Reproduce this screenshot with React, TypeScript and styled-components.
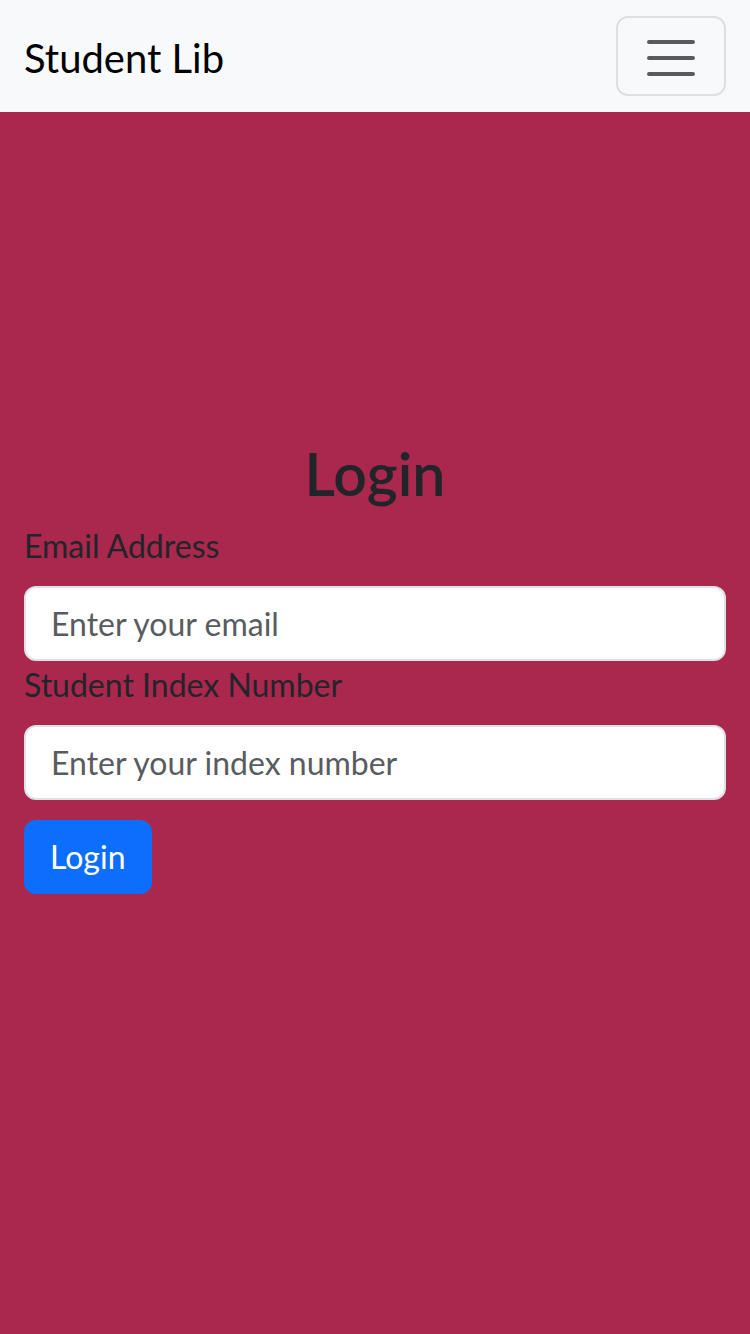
import React from "react";
import styled, { createGlobalStyle } from "styled-components";

const Global = createGlobalStyle`
  html, body { margin: 0; padding: 0; }
  body {
    background: #aa274e;
    font-family: Lato, "Noto Sans", sans-serif;
    color: #212529;
    font-size: 32px;
    line-height: 1.5;
  }
  * { box-sizing: border-box; }
`;

const Navbar = styled.nav`
  background: #f8f9fa;
  height: 112px;
  padding: 16px 24px;
  display: flex;
  align-items: center;
  justify-content: space-between;
`;

const Brand = styled.a`
  font-size: 40px;
  line-height: 60px;
  color: #000;
  text-decoration: none;
  padding: 12px 0 8px;
`;

const Toggler = styled.button`
  width: 110px;
  height: 80px;
  border: 2px solid rgba(0, 0, 0, 0.1);
  border-radius: 12px;
  background: transparent;
  padding: 4px 0 0;
  display: flex;
  align-items: center;
  justify-content: center;
`;

const Main = styled.main`
  padding: 326px 24px 0;
`;

const Title = styled.h1`
  margin: 0 0 12px;
  font-size: 59px;
  font-weight: 600;
  line-height: 72px;
  text-align: center;
  color: #212529;
`;

const Label = styled.label`
  display: block;
  margin-bottom: 16px;
  line-height: 48px;
  font-size: 32px;
  color: #212529;
`;

const Input = styled.input`
  display: block;
  width: 100%;
  height: 75px;
  padding: 12px 25px;
  font-family: inherit;
  font-size: 32px;
  color: #212529;
  background: #fff;
  border: 2px solid #dee2e6;
  border-radius: 12px;
  outline: none;
  &::placeholder { color: #595c5f; }
`;

const Button = styled.button`
  margin-top: 20px;
  height: 74px;
  padding: 0 26px 2px;
  background: #0d6efd;
  color: #fff;
  border: none;
  border-radius: 12px;
  font-family: inherit;
  font-size: 32px;
`;

export default function App() {
  return (
    <>
      <Global />
      <Navbar>
        <Brand href="#">Student Lib</Brand>
        <Toggler aria-label="Toggle navigation">
          <svg width="60" height="60" viewBox="0 0 30 30">
            <path d="M4 7h22M4 15h22M4 23h22" stroke="rgba(33,37,41,0.75)" strokeWidth="2" strokeLinecap="round" />
          </svg>
        </Toggler>
      </Navbar>
      <Main>
        <Title>Login</Title>
        <form>
          <Label htmlFor="email">Email Address</Label>
          <Input id="email" type="email" placeholder="Enter your email" />
          <Label htmlFor="index">Student Index Number</Label>
          <Input id="index" type="text" placeholder="Enter your index number" />
          <Button type="button">Login</Button>
        </form>
      </Main>
    </>
  );
}
